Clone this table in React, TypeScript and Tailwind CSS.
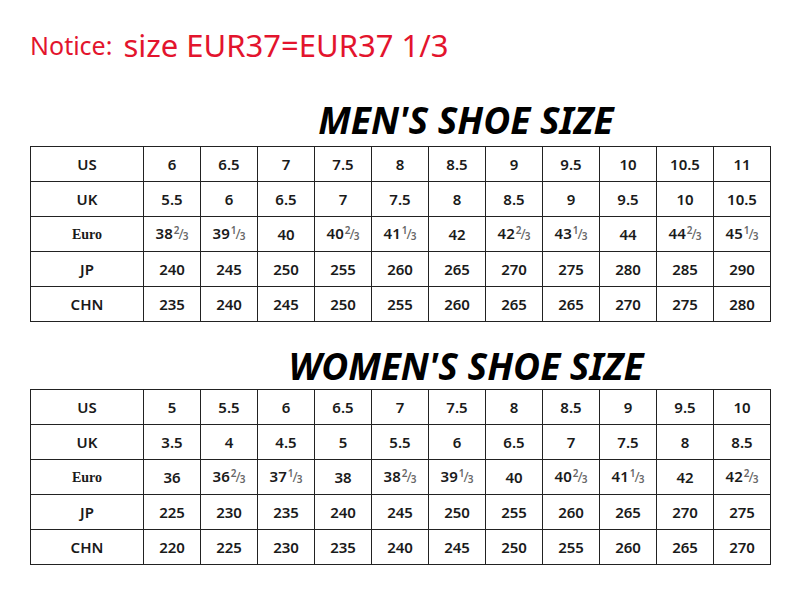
import React from "react";

type Row = { label: string; values: string[] };

const menRows: Row[] = [
  { label: "US", values: ["6", "6.5", "7", "7.5", "8", "8.5", "9", "9.5", "10", "10.5", "11"] },
  { label: "UK", values: ["5.5", "6", "6.5", "7", "7.5", "8", "8.5", "9", "9.5", "10", "10.5"] },
  { label: "Euro", values: ["38 2/3", "39 1/3", "40", "40 2/3", "41 1/3", "42", "42 2/3", "43 1/3", "44", "44 2/3", "45 1/3"] },
  { label: "JP", values: ["240", "245", "250", "255", "260", "265", "270", "275", "280", "285", "290"] },
  { label: "CHN", values: ["235", "240", "245", "250", "255", "260", "265", "265", "270", "275", "280"] },
];

const womenRows: Row[] = [
  { label: "US", values: ["5", "5.5", "6", "6.5", "7", "7.5", "8", "8.5", "9", "9.5", "10"] },
  { label: "UK", values: ["3.5", "4", "4.5", "5", "5.5", "6", "6.5", "7", "7.5", "8", "8.5"] },
  { label: "Euro", values: ["36", "36 2/3", "37 1/3", "38", "38 2/3", "39 1/3", "40", "40 2/3", "41 1/3", "42", "42 2/3"] },
  { label: "JP", values: ["225", "230", "235", "240", "245", "250", "255", "260", "265", "270", "275"] },
  { label: "CHN", values: ["220", "225", "230", "235", "240", "245", "250", "255", "260", "265", "270"] },
];

// whole number plus a hand-set fraction (2/3, 1/3), numerator raised, denominator dropped
const Value: React.FC<{ v: string }> = ({ v }) => {
  const [whole, frac] = v.split(" ");
  if (!frac) return <span>{v}</span>;
  const [num, den] = frac.split("/");
  return (
    <span>
      {whole}
      <span className="ml-[1px] text-[10px] font-semibold text-[#666]">
        <span className="relative -top-[5px]">{num}</span>
        <span className="text-[14px] font-normal -mx-[1px]">/</span>
        <span className="relative top-[1px]">{den}</span>
      </span>
    </span>
  );
};

const SizeTable: React.FC<{ rows: Row[] }> = ({ rows }) => (
  <table className="w-[740px] table-fixed border-collapse border border-[#222] text-[15px] font-semibold text-[#1a1a1a] [font-family:'Noto_Sans',sans-serif]">
    <colgroup>
      <col className="w-[113px]" />
      {rows[0].values.map((_, i) => (
        <col key={i} className="w-[57px]" />
      ))}
    </colgroup>
    <tbody>
      {rows.map((row) => (
        <tr key={row.label} className="h-[35px]">
          <td
            className={
              row.label === "Euro"
                ? "border border-[#222] p-0 text-center text-[14px] font-bold [font-family:'Liberation_Serif',serif]"
                : "border border-[#222] p-0 text-center"
            }
          >
            {row.label}
          </td>
          {row.values.map((v, i) => (
            <td key={i} className="border border-[#222] p-0 text-center leading-[20px]">
              <Value v={v} />
            </td>
          ))}
        </tr>
      ))}
    </tbody>
  </table>
);

const Title: React.FC<{ children: React.ReactNode; className?: string }> = ({ children, className }) => (
  <h2
    className={
      "text-[37px] leading-[37px] font-bold italic text-black text-center [font-family:'Noto_Sans',sans-serif] " +
      (className ?? "")
    }
  >
    {children}
  </h2>
);

export default function App() {
  return (
    <div className="w-[800px] h-[605px] bg-white pl-[30px] pt-[23px]">
      <div className="flex items-baseline gap-[11px] h-[40px] text-[#e3142d] [font-family:'Noto_Sans',sans-serif]">
        <span className="text-[25px] leading-[40px]">Notice:</span>
        <span className="text-[31px] leading-[40px] relative top-[2px]">size EUR37=EUR37 1/3</span>
      </div>
      <Title className="mt-[38px] mb-[8px] pl-[102px]">MEN'S SHOE SIZE</Title>
      <SizeTable rows={menRows} />
      <Title className="mt-[25px] mb-[5px] pl-[102px]">WOMEN'S SHOE SIZE</Title>
      <SizeTable rows={womenRows} />
    </div>
  );
}
